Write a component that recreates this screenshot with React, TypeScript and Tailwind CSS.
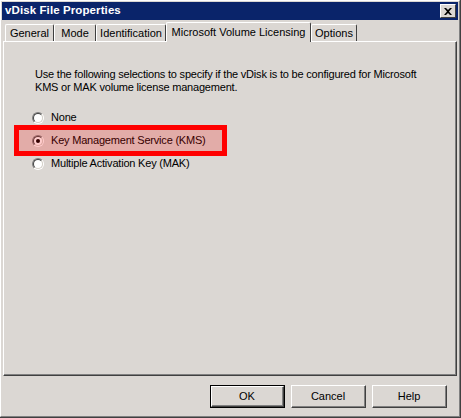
import React from 'react';

// Classic Windows property sheet: "vDisk File Properties"

const FONT = "font-['Liberation_Sans',Arial,sans-serif]";

const Radio: React.FC<{ checked?: boolean }> = ({ checked }) => (
  <div className="w-[12px] h-[12px] rounded-full border border-t-[#808080] border-l-[#808080] border-r-white border-b-white shrink-0">
    <div className="w-full h-full rounded-full border border-t-[#404040] border-l-[#404040] border-r-[#d4d0c8] border-b-[#d4d0c8] bg-white flex items-center justify-center">
      {checked && <div className="w-[4px] h-[4px] rounded-full bg-black" />}
    </div>
  </div>
);

const Tab: React.FC<{ label: string; width: string; active?: boolean }> = ({ label, width, active }) =>
  active ? (
    <div
      className={`${width} h-[20px] relative z-10 bg-[#dbd7d3] border-t border-l border-white border-r border-r-[#404040] rounded-t-[2px] flex items-start justify-center pt-[3px] text-[11px] leading-[13px] text-black whitespace-nowrap`}
    >
      {label}
    </div>
  ) : (
    <div
      className={`${width} h-[17px] mt-[2px] border-t border-l border-white border-r border-r-[#404040] rounded-t-[2px] flex items-start justify-center pt-[2px] text-[11px] leading-[13px] text-black whitespace-nowrap`}
    >
      {label}
    </div>
  );

const Button: React.FC<{ label: string; isDefault?: boolean }> = ({ label, isDefault }) => (
  <div className={`w-[75px] h-[23px] ${isDefault ? 'border border-black' : ''}`}>
    <div className="w-full h-full border-t border-l border-white border-r border-b border-r-[#404040] border-b-[#404040]">
      <div className="w-full h-full border-r border-b border-r-[#808080] border-b-[#808080] flex items-center justify-center text-[11px] text-black">
        {label}
      </div>
    </div>
  </div>
);

export default function App() {
  return (
    <div
      className={`w-[461px] h-[418px] bg-[#dbd7d3] ${FONT} overflow-hidden border-r border-b border-[#404040]`}
    >
      <div className="w-full h-full border-t border-l border-white border-r border-b border-r-[#808080] border-b-[#808080] px-[1px] pt-[1px] flex flex-col">
        {/* Title bar */}
        <div className="h-[18px] bg-[#0a246a] flex items-center justify-between pl-[3px] pr-[2px]">
          <span className="text-white font-bold text-[11.5px] tracking-[0.1px] leading-none">vDisk File Properties</span>
          <div className="w-[16px] h-[14px] bg-[#dbd7d3] border-t border-l border-white border-r border-b border-r-[#404040] border-b-[#404040] flex items-center justify-center">
            <svg width="8" height="7" viewBox="0 0 8 7">
              <path d="M0 0h2l2 2 2-2h2L5 3.5 8 7H6L4 5 2 7H0l3-3.5z" fill="#000" />
            </svg>
          </div>
        </div>

        {/* Tabs */}
        <div className="mt-[2px] pl-[3px] pr-[2px] flex items-start h-[20px] -mb-px">
          <Tab label="General" width="w-[49px]" />
          <Tab label="Mode" width="w-[42px]" />
          <Tab label="Identification" width="w-[70px]" />
          <Tab label="Microsoft Volume Licensing" width="w-[145px]" active />
          <Tab label="Options" width="w-[46px]" />
        </div>

        {/* Panel */}
        <div className="ml-[1px] mr-[1px] h-[335px] border-t border-l border-white border-r border-b border-r-[#404040] border-b-[#404040]">
          <div className="w-full h-full border-r border-b border-r-[#808080] border-b-[#808080] pl-[31px] pt-[26px] flex flex-col tracking-[-0.2px]">
            <p className="text-[11px] leading-[13px] text-black w-[400px]">
              Use the following selections to specify if the vDisk is to be configured for Microsoft KMS or MAK volume license management.
            </p>

            <div className="mt-[12px] -ml-[3px] flex flex-col">
              <div className="h-[23px] flex items-center gap-[7px] text-[11px] text-black">
                <Radio />
                <span>None</span>
              </div>
              <div className="h-[23px] flex items-center gap-[7px] text-[11px] text-black relative">
                <Radio checked />
                <span>Key Management Service (KMS)</span>
                <div className="absolute left-[-18px] top-[-4px] w-[213px] h-[31px] border-[5px] border-[#ff0000] bg-[rgba(255,0,0,0.2)] pointer-events-none" />
              </div>
              <div className="h-[23px] flex items-center gap-[7px] text-[11px] text-black">
                <Radio />
                <span>Multiple Activation Key (MAK)</span>
              </div>
            </div>
          </div>
        </div>

        {/* Buttons */}
        <div className="mt-[9px] flex justify-end gap-[6px] pr-[11px]">
          <Button label="OK" isDefault />
          <Button label="Cancel" />
          <Button label="Help" />
        </div>
      </div>
    </div>
  );
}
